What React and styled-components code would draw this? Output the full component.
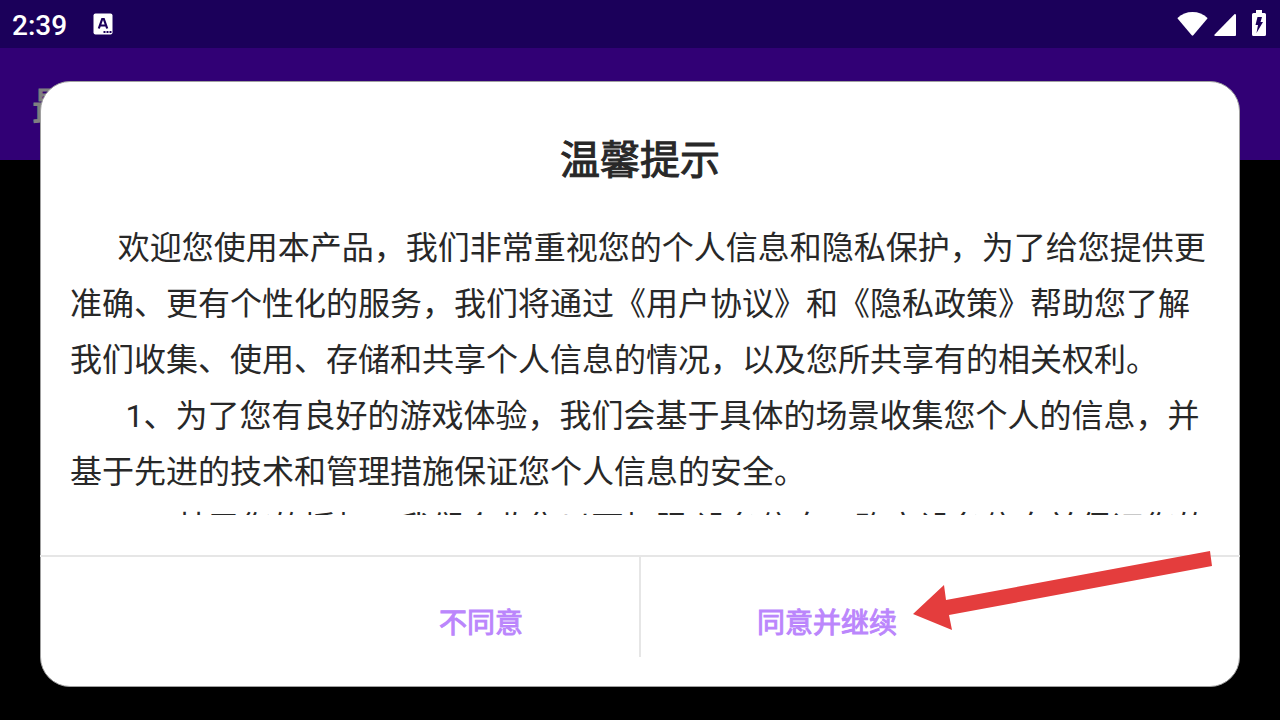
import React from 'react';
import styled, { createGlobalStyle } from 'styled-components';

const GlobalStyle = createGlobalStyle`
  * {
    box-sizing: border-box;
  }

  body {
    margin: 0;
    background-color: #000;
    font-family: Roboto, 'Noto Sans CJK SC', sans-serif;
  }
`;

const Screen = styled.div`
  position: relative;
  min-height: 100vh;
  background-color: #000;
`;

const StatusBar = styled.header`
  display: flex;
  align-items: center;
  height: 48px;
  padding: 0 12px;
  background-color: #1b005a;
  color: #fff;
`;

const Clock = styled.time`
  margin-right: 26px;
  padding-top: 4px;
  font-size: 28px;
  font-weight: 500;
  line-height: 44px;
`;

const StatusIcons = styled.div`
  display: flex;
  align-items: center;
  margin-left: auto;
`;

const AppBar = styled.div`
  display: flex;
  align-items: center;
  height: 112px;
  padding: 8px 32px 0;
  background-color: #310075;
`;

const AppTitle = styled.h1`
  margin: 0;
  color: #808080;
  font-size: 40px;
  font-weight: 400;
  line-height: 56px;
  -webkit-text-stroke: 1px currentColor;
`;

const Overlay = styled.div`
  position: absolute;
  inset: 48px 0 0;
  display: flex;
  align-items: center;
  padding: 0 40px;
`;

const Dialog = styled.section`
  position: relative;
  width: 100%;
  border: 1px solid #a0a0a0;
  border-radius: 30px;
  background-color: #fff;
`;

const DialogTitle = styled.h2`
  margin: 0;
  padding: 49px 0 29px;
  color: #282828;
  font-size: 40px;
  font-weight: 400;
  line-height: 60px;
  text-align: center;
  -webkit-text-stroke: 1px currentColor;
`;

const Message = styled.div`
  height: 295px;
  margin-bottom: 40px;
  padding: 0 29px;
  overflow: hidden;
  color: #282828;
  font-size: 32px;
  line-height: 56px;
`;

const Line = styled.p`
  margin: 0;
  white-space: pre-wrap;
`;

const Actions = styled.div`
  display: grid;
  grid-template-columns: 1fr 2px 1fr;
  margin: 0 -1px;
  padding-bottom: 29px;
  border-top: 2px solid #e6e6e6;
`;

const Divider = styled.span`
  height: 100px;
  background-color: #e6e6e6;
`;

const ActionButton = styled.button`
  height: 100px;
  padding: 34px 116px 0;
  border: none;
  background: none;
  color: #bb86fc;
  font-family: inherit;
  font-size: 28px;
  font-weight: 400;
  line-height: 40px;
  text-align: ${({ $align }) => $align};
  -webkit-text-stroke: 1px currentColor;
  cursor: pointer;
`;

const Arrow = styled.svg`
  position: absolute;
  right: 26px;
  bottom: 56px;
  pointer-events: none;
`;

const KeyboardIcon = () => (
  <svg width="20" height="22" viewBox="0 0 20 22" aria-hidden="true">
    <rect x="0.500" y="0.500" width="19" height="21" rx="2" fill="#fff" />
    <path d="M5.800 15.500 9.200 6h1.600l3.400 9.500M7.300 12.500h5.400" fill="none" stroke="#1b005a" strokeWidth="2.200" />
    <path d="M10.500 18h2v2h-2zM13.500 18h2v2h-2zM16.500 18h2v2h-2z" fill="#1b005a" />
  </svg>
);

const WifiIcon = () => (
  <svg width="31" height="24" viewBox="0 0 32 24" preserveAspectRatio="none" aria-hidden="true">
    <path d="M.8 5.800C5 2 10 0 16 0s11 2 15.200 5.800q.4.400 0 1L16.800 23.200q-.8.900-1.600 0L.8 6.800q-.4-.6 0-1z" fill="#fff" />
  </svg>
);

const SignalIcon = () => (
  <svg width="22" height="22" viewBox="0 0 23 22" preserveAspectRatio="none" aria-hidden="true">
    <path d="M21.600 0Q23 0 23 1v20q0 1-1 1H1.500Q0 22 .4 20.800z" fill="#fff" />
  </svg>
);

const BatteryIcon = () => (
  <svg width="14" height="26" viewBox="0 0 14 26" aria-hidden="true">
    <path d="M4 0h6v3h2.500Q14 3 14 4.500v20q0 1.500-1.500 1.500h-11Q0 26 0 24.500v-20Q0 3 1.500 3H4z" fill="#fff" />
    <path d="M5.500 7h4.500L8.500 12H11L4.500 23 6 15H3.500z" fill="#1b005a" />
  </svg>
);

const SignalSlot = styled.span`
  display: flex;
  margin: 2px 16px 0 6px;
`;

const BatterySlot = styled.span`
  display: flex;
  margin: 0 2px 2px 0;
`;

const agreement = [
  '      欢迎您使用本产品，我们非常重视您的个人信息和隐私保护，为了给您提供更准确、更有个性化的服务，我们将通过《用户协议》和《隐私政策》帮助您了解我们收集、使用、存储和共享个人信息的情况，以及您所共享有的相关权利。',
  '       1、为了您有良好的游戏体验，我们会基于具体的场景收集您个人的信息，并基于先进的技术和管理措施保证您个人信息的安全。',
  '       2、基于您的授权，我们会收集以下权限:设备信息、确定设备信息并保证您的',
];

const App = () => {
  return (
    <>
      <GlobalStyle />
      <Screen>
        <StatusBar>
          <Clock>2:39</Clock>
          <KeyboardIcon />
          <StatusIcons>
            <WifiIcon />
            <SignalSlot>
              <SignalIcon />
            </SignalSlot>
            <BatterySlot>
              <BatteryIcon />
            </BatterySlot>
          </StatusIcons>
        </StatusBar>
        <AppBar>
          <AppTitle>最</AppTitle>
        </AppBar>
        <Overlay>
          <Dialog role="dialog" aria-labelledby="dialog-title">
            <DialogTitle id="dialog-title">温馨提示</DialogTitle>
            <Message>
              {agreement.map((text) => (
                <Line key={text}>{text}</Line>
              ))}
            </Message>
            <Actions>
              <ActionButton type="button" $align="right">不同意</ActionButton>
              <Divider />
              <ActionButton type="button" $align="left">同意并继续</ActionButton>
            </Actions>
            <Arrow width="300" height="80" viewBox="0 0 300 80" aria-hidden="true">
              <path d="M0 64 31 35 33 50 297 1 299 16 36 65 39 80z" fill="#e43d3d" />
            </Arrow>
          </Dialog>
        </Overlay>
      </Screen>
    </>
  );
};

export default App;
